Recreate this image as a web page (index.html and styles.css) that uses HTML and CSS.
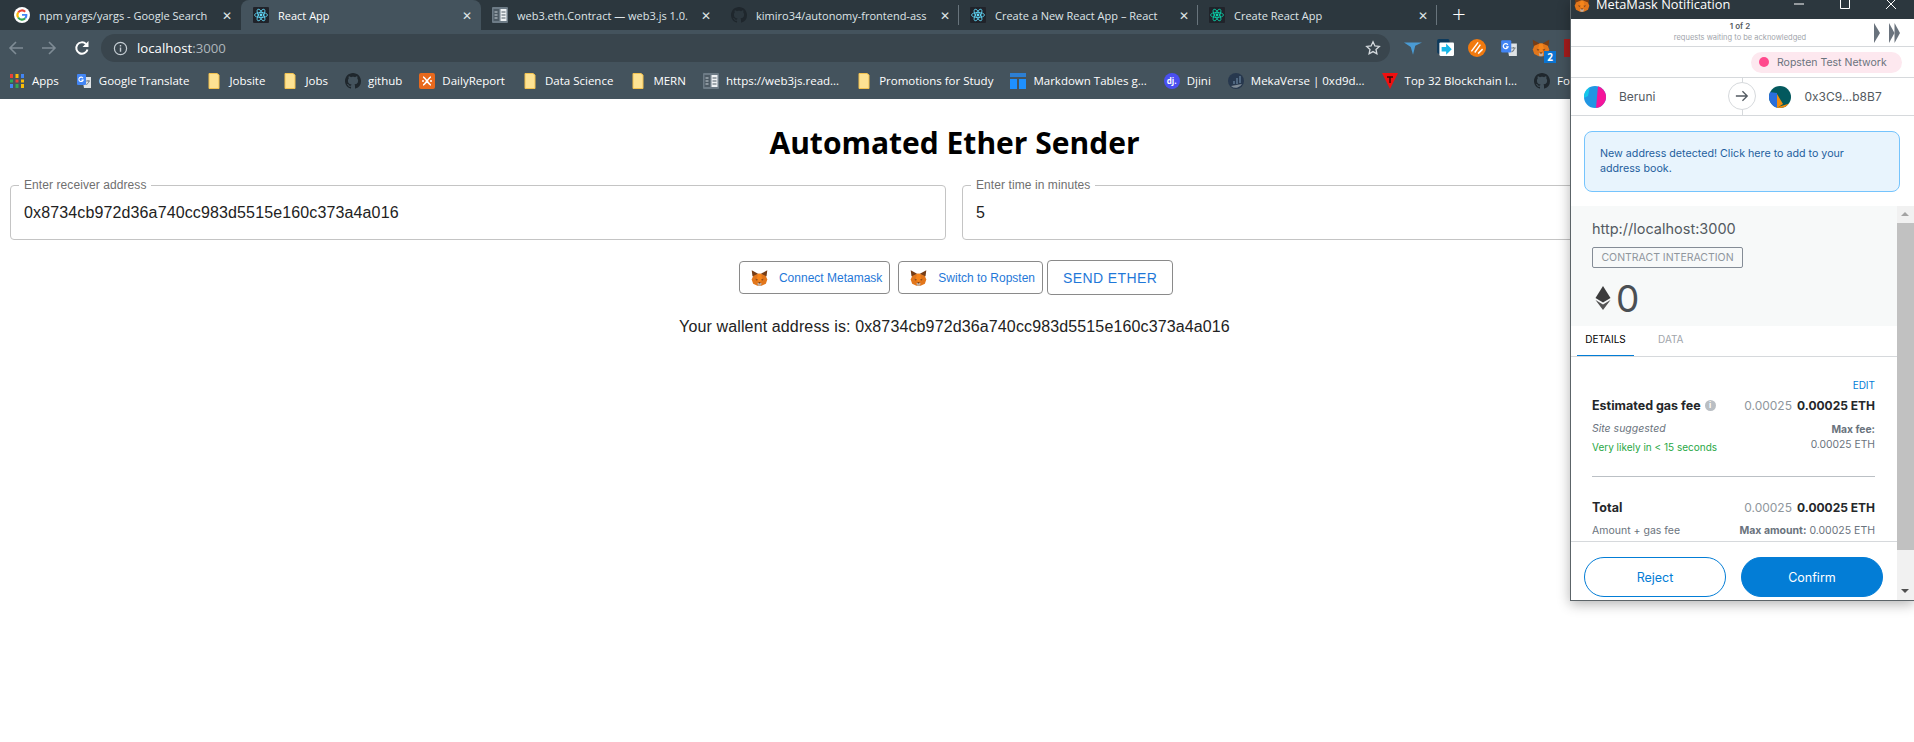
FILE: index.html
```html
<!DOCTYPE html>
<html>
<head>
  <title>React App</title>
  <link rel="stylesheet" href="styles.css">
</head>
<body>
  <svg class="sprite" xmlns="http://www.w3.org/2000/svg">
    <symbol id="fox" viewBox="0 0 24 22">
      <polygon fill="#763d16" points="1,0 10,5 4,10 2,8"/>
      <polygon fill="#763d16" points="23,0 14,5 20,10 22,8"/>
      <polygon fill="#e2761b" points="3,8 10,5 14,5 21,8 23,13 21,19 15,22 9,22 3,19 1,13"/>
      <polygon fill="#f6851b" points="10,5 14,5 16,13 12,17 8,13"/>
      <polygon fill="#8a4a1c" points="6,12 10,13 8,15"/>
      <polygon fill="#8a4a1c" points="18,12 14,13 16,15"/>
      <polygon fill="#c0ad9e" points="9,18 15,18 14,22 10,22"/>
      <polygon fill="#5c3317" points="10.5,17 13.5,17 12,19"/>
    </symbol>
    <symbol id="react" viewBox="0 0 16 16">
      <rect width="16" height="16" rx="1" fill="#20232a"/>
      <g fill="none" stroke="#61dafb" stroke-width=".8">
        <ellipse cx="8" cy="8" rx="6.5" ry="2.5"/>
        <ellipse cx="8" cy="8" rx="6.5" ry="2.5" transform="rotate(60 8 8)"/>
        <ellipse cx="8" cy="8" rx="6.5" ry="2.5" transform="rotate(120 8 8)"/>
      </g>
      <circle cx="8" cy="8" r="1.4" fill="#61dafb"/>
    </symbol>
    <symbol id="react-green" viewBox="0 0 16 16">
      <rect width="16" height="16" rx="1" fill="#20232a"/>
      <g fill="none" stroke="#09d3ac" stroke-width=".8">
        <ellipse cx="8" cy="8" rx="6.5" ry="2.5"/>
        <ellipse cx="8" cy="8" rx="6.5" ry="2.5" transform="rotate(60 8 8)"/>
        <ellipse cx="8" cy="8" rx="6.5" ry="2.5" transform="rotate(120 8 8)"/>
      </g>
      <circle cx="8" cy="8" r="1.4" fill="#09d3ac"/>
    </symbol>
    <symbol id="google" viewBox="0 0 20 20">
      <circle cx="10" cy="10" r="10" fill="#fff"/>
      <path fill="none" stroke="#ea4335" stroke-width="2.6" d="M5.2 6.9A5.8 5.8 0 0 1 14 5.8"/>
      <path fill="none" stroke="#fbbc05" stroke-width="2.6" d="M5.2 6.9a5.8 5.8 0 0 0 0 6.2"/>
      <path fill="none" stroke="#34a853" stroke-width="2.6" d="M5.2 13.1a5.8 5.8 0 0 0 8.9 1.1"/>
      <path fill="#4285f4" d="M10 8.6h6.6c.4 2.400-.3 4.600-1.600 6.200l-2-1.600c.6-.6 1-1.300 1.100-2.200H10z"/>
    </symbol>
    <symbol id="docs" viewBox="0 0 16 16">
      <rect width="16" height="16" rx="1" fill="#6d7b86"/>
      <rect x="1.500" y="2" width="5.500" height="12" fill="#4d5a64"/>
      <rect x="8.500" y="2" width="6" height="12" fill="#eef1f3"/>
      <path stroke="#4d5a64" stroke-width="1.200" d="M9.500 5h4M9.500 8h4M9.500 11h4"/>
      <path stroke="#c9d1d7" stroke-width="1.200" d="M2.500 5h3M2.500 8h3M2.500 11h3"/>
    </symbol>
    <symbol id="github" viewBox="0 0 16 16">
      <path fill="#1f272d" d="M8 0C3.580 0 0 3.580 0 8c0 3.540 2.290 6.530 5.470 7.590.400.070.550-.170.550-.380 0-.190-.010-.820-.010-1.490-2.010.370-2.530-.490-2.690-.940-.090-.230-.480-.940-.820-1.130-.280-.150-.680-.520-.010-.530.630-.010 1.080.580 1.230.820.720 1.210 1.870.870 2.330.660.070-.520.280-.870.510-1.070-1.780-.200-3.640-.890-3.640-3.950 0-.870.310-1.590.820-2.150-.080-.200-.360-1.020.080-2.120 0 0 .670-.210 2.200.820.640-.180 1.320-.270 2-.270.680 0 1.360.090 2 .270 1.530-1.040 2.200-.820 2.200-.820.440 1.100.160 1.920.080 2.120.510.560.820 1.270.820 2.150 0 3.070-1.870 3.750-3.650 3.950.290.250.540.730.540 1.480 0 1.070-.010 1.930-.010 2.200 0 .210.150.460.550.380A8.013 8.013 0 0016 8c0-4.420-3.580-8-8-8z"/>
    </symbol>
    <symbol id="folder" viewBox="0 0 16 16">
      <path fill="#fde293" stroke="#f2c14e" d="M3 .5h8l2 1.500v13.500H3z"/>
    </symbol>
    <symbol id="translate" viewBox="0 0 16 16">
      <path fill="#dfe3e6" d="M6 4h9v11H8z"/>
      <rect x="1" y="1" width="9" height="11" rx="1" fill="#4285f4"/>
      <path fill="none" stroke="#fff" stroke-width="1.100" d="M7 5.200A2.200 2.200 0 1 0 7.200 7H5.400"/>
      <path fill="none" stroke="#7a8288" stroke-width="1" d="M10 8h4M12 7v1M13 8c-.4 2-1.500 3-2.800 3.500"/>
    </symbol>
  </svg>

  <div class="browser">
    <div class="tab-strip">
      <div class="tab tab-first">
        <svg class="favicon"><use href="#google"/></svg>
        <span class="tab-title">npm yargs/yargs - Google Search</span>
        <span class="tab-close">&#10005;</span>
      </div>
      <div class="tab active">
        <svg class="favicon"><use href="#react"/></svg>
        <span class="tab-title">React App</span>
        <span class="tab-close">&#10005;</span>
      </div>
      <div class="tab">
        <svg class="favicon"><use href="#docs"/></svg>
        <span class="tab-title">web3.eth.Contract — web3.js 1.0.</span>
        <span class="tab-close">&#10005;</span>
      </div>
      <div class="tab sep">
        <svg class="favicon"><use href="#github"/></svg>
        <span class="tab-title">kimiro34/autonomy-frontend-ass</span>
        <span class="tab-close">&#10005;</span>
      </div>
      <div class="tab sep">
        <svg class="favicon"><use href="#react"/></svg>
        <span class="tab-title">Create a New React App – React</span>
        <span class="tab-close">&#10005;</span>
      </div>
      <div class="tab sep">
        <svg class="favicon"><use href="#react-green"/></svg>
        <span class="tab-title">Create React App</span>
        <span class="tab-close">&#10005;</span>
      </div>
      <div class="new-tab">+</div>
    </div>

    <div class="toolbar">
      <svg class="nav-icon" viewBox="0 0 16 16"><path fill="none" stroke="#7f8c95" stroke-width="1.600" d="M15 8H2M8 2 2 8l6 6"/></svg>
      <svg class="nav-icon" viewBox="0 0 16 16"><path fill="none" stroke="#7f8c95" stroke-width="1.600" d="M1 8h13M8 2l6 6-6 6"/></svg>
      <svg class="nav-icon" viewBox="0 0 16 16"><path fill="none" stroke="#fff" stroke-width="2" d="M13.500 9.500A5.700 5.700 0 1 1 12 4"/><path fill="#fff" d="M14.500 1v6h-6z"/></svg>
      <div class="omnibox">
        <svg class="info-icon" viewBox="0 0 16 16"><circle cx="8" cy="8" r="6.500" fill="none" stroke="#c4ccd2" stroke-width="1.300"/><path stroke="#c4ccd2" stroke-width="1.500" d="M8 7v4.500M8 4.300v1.500"/></svg>
        <span class="url">localhost<span class="url-dim">:3000</span></span>
        <svg class="star-icon" viewBox="0 0 16 16"><path fill="none" stroke="#d5dade" stroke-width="1.300" d="m8 1.800 1.900 4.100 4.400.500-3.300 3 .900 4.400L8 11.600l-3.900 2.200.900-4.400-3.300-3 4.400-.500z"/></svg>
      </div>
      <div class="extensions">
        <svg class="ext-icon" viewBox="0 0 16 16"><path fill="#4a9bd4" d="M0 3h16l-6 3-2 8-2-7z"/></svg>
        <svg class="ext-icon" viewBox="0 0 16 16"><rect x="1" y="0" width="11" height="13" rx="1.500" fill="#0d3a5c"/><rect x="3" y="3" width="13" height="12" rx="1" fill="#fff"/><path fill="#17b7e8" d="M5 7h4V4l5 5-5 5v-3H5z"/></svg>
        <svg class="ext-icon" viewBox="0 0 16 16"><circle cx="8" cy="8" r="8" fill="#f27a0f"/><path fill="none" stroke="#fff" stroke-width="1.300" d="M3 11 9 3M6 12l5-7M9 13l4-4"/></svg>
        <svg class="ext-icon"><use href="#translate"/></svg>
        <div class="ext-badged">
          <svg class="ext-icon"><use href="#fox"/></svg>
          <span class="ext-badge">2</span>
        </div>
        <div class="ext-red"></div>
      </div>
    </div>

    <div class="bookmarks">
      <div class="bookmark">
        <svg class="bm-icon" viewBox="0 0 16 16">
          <path stroke="#ea4335" stroke-width="3" d="M2.500 1v4"/><path stroke="#fbbc05" stroke-width="3" d="M8 1v4"/><path stroke="#4285f4" stroke-width="3" d="M13.500 1v4"/>
          <path stroke="#34a853" stroke-width="3" d="M2.500 6.500v3"/><path stroke="#ea4335" stroke-width="3" d="M8 6.500v3"/><path stroke="#fbbc05" stroke-width="3" d="M13.500 6.500v3"/>
          <path stroke="#4285f4" stroke-width="3" d="M2.500 11v4"/><path stroke="#34a853" stroke-width="3" d="M8 11v4"/><path stroke="#fbbc05" stroke-width="3" d="M13.500 11v4"/>
        </svg>
        Apps
      </div>
      <div class="bookmark"><svg class="bm-icon"><use href="#translate"/></svg>Google Translate</div>
      <div class="bookmark"><svg class="bm-icon"><use href="#folder"/></svg>Jobsite</div>
      <div class="bookmark"><svg class="bm-icon"><use href="#folder"/></svg>Jobs</div>
      <div class="bookmark"><svg class="bm-icon"><use href="#github"/></svg>github</div>
      <div class="bookmark">
        <svg class="bm-icon" viewBox="0 0 16 16"><rect width="16" height="16" rx="2" fill="#e8691d"/><path fill="none" stroke="#fff" stroke-width="1.600" d="M4 4c2 0 6 8 8 8M12 4C10 4 6 12 4 12M3 8h2M11 8h2"/></svg>
        DailyReport
      </div>
      <div class="bookmark"><svg class="bm-icon"><use href="#folder"/></svg>Data Science</div>
      <div class="bookmark"><svg class="bm-icon"><use href="#folder"/></svg>MERN</div>
      <div class="bookmark"><svg class="bm-icon"><use href="#docs"/></svg>https://web3js.read...</div>
      <div class="bookmark"><svg class="bm-icon"><use href="#folder"/></svg>Promotions for Study</div>
      <div class="bookmark">
        <svg class="bm-icon" viewBox="0 0 16 16"><rect width="16" height="4" fill="#2d7fd3"/><rect y="6" width="7" height="10" fill="#1e90ff"/><rect x="9" y="6" width="7" height="10" fill="#1e90ff"/></svg>
        Markdown Tables g...
      </div>
      <div class="bookmark"><span class="djini-icon">dj.</span>Djini</div>
      <div class="bookmark">
        <svg class="bm-icon" viewBox="0 0 16 16"><circle cx="8" cy="8" r="8" fill="#27384e"/><path fill="#7f8b96" d="M3 13a7 7 0 0 0 11-2l-3 .500z"/><path stroke="#5e7690" stroke-width="1.500" d="M6 11V8M9 11V5M12 10V3"/></svg>
        MekaVerse | 0xd9d...
      </div>
      <div class="bookmark">
        <svg class="bm-icon" viewBox="0 0 16 16"><polygon fill="#f01010" points="0,0 16,0 8,16"/><path stroke="#3a0808" stroke-width="1.500" d="M5 4h6M8 4v6"/></svg>
        Top 32 Blockchain I...
      </div>
      <div class="bookmark"><svg class="bm-icon"><use href="#github"/></svg>For s</div>
    </div>
  </div>

  <main class="app">
    <h1 class="app-title">Automated Ether Sender</h1>
    <div class="field-row">
      <fieldset class="field">
        <legend>Enter receiver address</legend>
        <input type="text" value="0x8734cb972d36a740cc983d5515e160c373a4a016">
      </fieldset>
      <fieldset class="field">
        <legend>Enter time in minutes</legend>
        <input type="text" value="5">
      </fieldset>
    </div>
    <div class="actions">
      <button class="btn btn-fox"><svg class="fox-icon"><use href="#fox"/></svg>Connect Metamask</button>
      <button class="btn btn-fox"><svg class="fox-icon"><use href="#fox"/></svg>Switch to Ropsten</button>
      <button class="btn btn-send">SEND ETHER</button>
    </div>
    <p class="wallet">Your wallent address is: 0x8734cb972d36a740cc983d5515e160c373a4a016</p>
  </main>

  <div class="popup">
    <div class="popup-titlebar">
      <svg class="popup-fox"><use href="#fox"/></svg>
      <span class="popup-title">MetaMask Notification</span>
      <div class="window-controls">
        <svg viewBox="0 0 12 12"><path stroke="#fff" d="M1 6h10"/></svg>
        <svg viewBox="0 0 12 12"><path fill="none" stroke="#fff" d="M1.500 1.500h9v9h-9z"/></svg>
        <svg viewBox="0 0 12 12"><path stroke="#fff" d="m1 1 10 10M11 1 1 11"/></svg>
      </div>
    </div>

    <div class="request-nav">
      <div class="request-count">1 of 2</div>
      <div class="request-text">requests waiting to be acknowledged</div>
      <div class="request-arrows">
        <svg class="arrow-one" viewBox="0 0 6 20"><polygon fill="#6a737d" points="0,0 6,10 0,20"/></svg>
        <svg class="arrow-two" viewBox="0 0 11 20"><polygon fill="#6a737d" points="0,0 5.500,10 0,20"/><polygon fill="#6a737d" points="5.500,0 11,10 5.500,20"/></svg>
      </div>
    </div>

    <div class="network-row">
      <div class="network-pill"><span class="network-dot"></span>Ropsten Test Network</div>
    </div>

    <div class="accounts">
      <svg class="avatar" viewBox="0 0 22 22">
        <clipPath id="av1"><circle cx="11" cy="11" r="11"/></clipPath>
        <g clip-path="url(#av1)">
          <rect width="22" height="22" fill="#2196e3"/>
          <polygon fill="#f5159a" points="14,0 22,0 22,22 12,22"/>
          <polygon fill="#14c8ea" points="0,0 6,0 4,10 0,12"/>
        </g>
      </svg>
      <span class="account-name">Beruni</span>
      <span class="account-arrow">
        <svg viewBox="0 0 16 16"><path fill="none" stroke="#535a61" stroke-width="1.500" d="M1 8h13M8.500 2.500 14 8l-5.500 5.500"/></svg>
      </span>
      <svg class="avatar avatar-to" viewBox="0 0 22 22">
        <clipPath id="av2"><circle cx="11" cy="11" r="11"/></clipPath>
        <g clip-path="url(#av2)">
          <rect width="22" height="22" fill="#03595e"/>
          <polygon fill="#f18c0e" points="6,22 22,17 22,22"/>
          <polygon fill="#f18c0e" points="8,8 14,18 8,22"/>
          <polygon fill="#2a6fdb" points="0,6 8,7 8,22 0,22"/>
        </g>
      </svg>
      <span class="account-name account-to">0x3C9...b8B7</span>
    </div>

    <div class="notice">New address detected! Click here to add to your address book.</div>

    <div class="confirm-area">
      <div class="confirm-col">
        <div class="summary">
          <div class="origin">http://localhost:3000</div>
          <div class="action-badge">CONTRACT INTERACTION</div>
          <div class="amount">
            <svg class="eth-icon" viewBox="0 0 16 24"><polygon fill="#3c3c3d" points="8,0 15.500,12 8,16.500 .5,12"/><polygon fill="#555" points=".5,14 8,18.500 15.500,14 8,24"/></svg>
            <span>0</span>
          </div>
        </div>
        <div class="popup-tabs">
          <div class="popup-tab selected">DETAILS</div>
          <div class="popup-tab">DATA</div>
        </div>
        <div class="details">
          <div class="edit-link">EDIT</div>
          <div class="fee-row">
            <span class="fee-label">Estimated gas fee <span class="fee-info">i</span></span>
            <span class="fee-values"><span class="fee-dim">0.00025</span><b>0.00025 ETH</b></span>
          </div>
          <div class="fee-sub">
            <div class="fee-left">
              <div class="fee-italic">Site suggested</div>
              <div class="fee-green">Very likely in &lt; 15 seconds</div>
            </div>
            <div class="fee-right">
              <div><b>Max fee:</b></div>
              <div>0.00025 ETH</div>
            </div>
          </div>
          <div class="fee-divider"></div>
          <div class="fee-row fee-total">
            <span class="fee-label">Total</span>
            <span class="fee-values"><span class="fee-dim">0.00025</span><b>0.00025 ETH</b></span>
          </div>
          <div class="fee-sub fee-sub-total">
            <span>Amount + gas fee</span>
            <span><b>Max amount:</b> 0.00025 ETH</span>
          </div>
        </div>
        <div class="popup-footer">
          <button class="pill-btn reject">Reject</button>
          <button class="pill-btn confirm">Confirm</button>
        </div>
      </div>
      <div class="scrollbar">
        <span class="scroll-up"></span>
        <div class="scroll-track"><div class="scroll-thumb"></div></div>
        <span class="scroll-down"></span>
      </div>
    </div>
  </div>
</body>
</html>
```

FILE: styles.css
```css
html, body {
  margin: 0;
  height: 100%;
  background: #fff;
}

body {
  position: relative;
  width: 1914px;
  height: 742px;
  overflow: hidden;
  font-family: 'Liberation Sans', Arial, sans-serif;
  color: #1a1a1a;
}

.sprite {
  display: none;
}

/* browser chrome */
.browser {
  height: 99px;
  background: #44535d;
  font-family: 'Open Sans', sans-serif;
  color: #fff;
}

.tab-strip {
  display: flex;
  height: 30px;
  background: #2c373e;
}

.tab {
  display: flex;
  align-items: center;
  position: relative;
  box-sizing: border-box;
  width: 239px;
  padding: 0 9px 0 11px;
  font-size: 11px;
  color: #dfe4e7;
}

.tab-first {
  width: 241px;
  padding-left: 14px;
}

.tab.active {
  background: #44535d;
  color: #fff;
  border-radius: 8px 8px 0 0;
  width: 240px;
  padding-left: 12px;
}

.tab.sep::after {
  content: "";
  position: absolute;
  right: 0;
  top: 5px;
  height: 20px;
  width: 1px;
  background: #68747c;
}

.favicon {
  flex: none;
  width: 16px;
  height: 16px;
  margin-right: 9px;
}

.tab-title {
  flex: 1;
  overflow: hidden;
  white-space: nowrap;
}

.tab-close {
  flex: none;
  margin-left: 6px;
  font-size: 12px;
  color: #dfe4e7;
}

.new-tab {
  margin-left: 15px;
  font-size: 24px;
  line-height: 28px;
  font-weight: 300;
}

.toolbar {
  display: flex;
  align-items: center;
  height: 32px;
  padding: 4px 0 0 8px;
  box-sizing: border-box;
}

.nav-icon {
  width: 16px;
  height: 16px;
  margin-right: 17px;
}

.omnibox {
  display: flex;
  align-items: center;
  box-sizing: border-box;
  width: 1289px;
  height: 28px;
  margin-left: -6px;
  padding: 0 9px 0 12px;
  background: #39454d;
  border-radius: 14px;
}

.info-icon {
  width: 15px;
  height: 15px;
  margin-right: 9px;
}

.url {
  flex: 1;
  font-size: 13.200px;
  color: #fff;
}

.url-dim {
  color: #aeb6bc;
}

.star-icon {
  width: 16px;
  height: 16px;
}

.extensions {
  display: flex;
  align-items: center;
  gap: 14px;
  margin-left: 14px;
}

.ext-icon {
  display: block;
  width: 18px;
  height: 18px;
}

.ext-badged {
  position: relative;
}

.ext-badge {
  position: absolute;
  right: -6px;
  bottom: -6px;
  width: 12px;
  height: 12px;
  background: #0b74d1;
  font-size: 10px;
  font-weight: 700;
  line-height: 12px;
  text-align: center;
}

.ext-red {
  width: 14px;
  height: 18px;
  background: #a51c1c;
}

.bookmarks {
  display: flex;
  align-items: center;
  gap: 17px;
  height: 37px;
  padding-left: 9px;
  font-size: 11.500px;
  white-space: nowrap;
}

.bookmark {
  display: flex;
  align-items: center;
}

.bm-icon {
  flex: none;
  width: 16px;
  height: 16px;
  margin-right: 7px;
}

.djini-icon {
  flex: none;
  width: 16px;
  height: 16px;
  margin-right: 7px;
  background: #4a4ff0;
  border-radius: 50%;
  font-size: 8px;
  font-weight: 700;
  line-height: 15px;
  text-align: center;
}

/* page */
.app-title {
  margin: 24px 0 15px;
  padding-right: 5px;
  font-family: 'Open Sans', sans-serif;
  font-size: 30px;
  line-height: 40px;
  font-weight: 700;
  text-align: center;
  color: #000;
}

.field-row {
  display: grid;
  grid-template-columns: 1fr 1fr;
  gap: 16px;
  padding: 0 16px 0 10px;
}

.field {
  margin: 0;
  padding: 0 8px;
  height: 62px;
  box-sizing: border-box;
  border: 1px solid #c4c4c4;
  border-radius: 4px;
  min-width: 0;
}

.field legend {
  padding: 0 5px;
  font-size: 12px;
  line-height: 14px;
  letter-spacing: .08px;
  color: #6f6f6f;
}

.field input {
  display: block;
  box-sizing: border-box;
  width: 100%;
  height: 42px;
  padding: 0 5px;
  border: none;
  outline: none;
  background: none;
  font-family: 'Liberation Sans', Arial, sans-serif;
  font-size: 16px;
  letter-spacing: .13px;
  color: #222;
}

.actions {
  display: flex;
  justify-content: center;
  align-items: center;
  gap: 4px;
  margin-top: 20px;
  padding-right: 2px;
}

.btn {
  box-sizing: border-box;
  display: flex;
  align-items: center;
  border: 1px solid #8a8a8a;
  border-radius: 4px;
  background: #fff;
  color: #1f78d8;
  font-family: 'Liberation Sans', Arial, sans-serif;
  cursor: pointer;
}

.btn-fox {
  height: 33px;
  padding: 0 7px 0 11px;
  margin-right: 4px;
  font-size: 12px;
}

.btn-fox + .btn-fox {
  margin-right: 0;
}

.fox-icon {
  width: 17px;
  height: 16px;
  margin-right: 11px;
}

.btn-send {
  height: 35px;
  width: 126px;
  justify-content: center;
  font-size: 14px;
  letter-spacing: .4px;
}

.wallet {
  margin: 23px 0 0;
  padding-right: 5px;
  font-size: 16px;
  line-height: 18px;
  letter-spacing: .13px;
  text-align: center;
  color: #222;
}

/* metamask window */
.popup {
  position: absolute;
  top: 0;
  right: 0;
  width: 344px;
  height: 601px;
  box-sizing: border-box;
  display: flex;
  flex-direction: column;
  background: #fff;
  border-left: 1px solid #5c6468;
  border-bottom: 1px solid #5c6468;
  box-shadow: 0 3px 12px rgba(0,0,0,0.3);
  font-family: 'Inter', sans-serif;
  color: #24272a;
  overflow: hidden;
}

.popup-titlebar {
  display: flex;
  align-items: center;
  flex: none;
  height: 19px;
  padding: 0 0 11px 3px;
  box-sizing: border-box;
  background: #2c373e;
  color: #fff;
  font-family: 'Open Sans', sans-serif;
  font-size: 12.800px;
}

.popup-fox {
  width: 16px;
  height: 15px;
  margin-right: 6px;
  flex: none;
}

.popup-title {
  white-space: nowrap;
}

.window-controls {
  display: flex;
  gap: 34px;
  margin-left: auto;
  padding-right: 17px;
}

.window-controls svg {
  width: 12px;
  height: 12px;
}

.request-nav {
  position: relative;
  flex: none;
  height: 28px;
  box-sizing: border-box;
  padding-top: 2px;
  border-bottom: 1px solid #d6d9dc;
  text-align: center;
  padding-right: 5px;
}

.request-count {
  font-size: 8px;
  line-height: 11px;
  font-weight: 600;
  color: #535a61;
}

.request-text {
  font-size: 7.500px;
  line-height: 11px;
  color: #9fa5ab;
}

.request-arrows {
  position: absolute;
  top: 4px;
  right: 14px;
  display: flex;
  gap: 9px;
}

.arrow-one {
  width: 6px;
  height: 20px;
}

.arrow-two {
  width: 11px;
  height: 20px;
}

.network-row {
  display: flex;
  justify-content: flex-end;
  align-items: center;
  flex: none;
  height: 31px;
  box-sizing: border-box;
  padding-right: 12px;
  border-bottom: 1px solid #d6d9dc;
}

.network-pill {
  display: flex;
  align-items: center;
  box-sizing: border-box;
  width: 151px;
  height: 21px;
  padding-left: 8px;
  background: #fde8ef;
  border-radius: 11px;
  font-size: 10.500px;
  color: #6a737d;
  white-space: nowrap;
}

.network-dot {
  width: 10px;
  height: 10px;
  margin-right: 8px;
  border-radius: 50%;
  background: #ff4a8d;
}

.accounts {
  position: relative;
  display: flex;
  align-items: center;
  flex: none;
  height: 38px;
  box-sizing: border-box;
  padding-left: 13px;
  border-bottom: 1px solid #d6d9dc;
}

.accounts::before {
  content: "";
  position: absolute;
  left: 171px;
  top: 0;
  bottom: 0;
  width: 1px;
  background: #d6d9dc;
}

.avatar {
  flex: none;
  width: 22px;
  height: 22px;
}

.account-name {
  margin-left: 13px;
  font-size: 12px;
  color: #535a61;
}

.account-arrow {
  position: absolute;
  left: 157px;
  top: 4px;
  display: flex;
  align-items: center;
  justify-content: center;
  box-sizing: border-box;
  width: 28px;
  height: 28px;
  border: 1px solid #d6d9dc;
  border-radius: 50%;
  background: #fff;
}

.account-arrow svg {
  width: 14px;
  height: 14px;
}

.avatar-to {
  margin-left: 114px;
}

.notice {
  flex: none;
  box-sizing: border-box;
  width: 316px;
  height: 61px;
  margin: 15px 0 14px 13px;
  padding: 14px 40px 0 15px;
  background: #e8f4fd;
  border: 1px solid #75c4fd;
  border-radius: 8px;
  font-size: 10.700px;
  line-height: 15px;
  color: #1f5f9e;
}

.confirm-area {
  display: flex;
  flex: 1;
  min-height: 0;
}

.confirm-col {
  display: flex;
  flex-direction: column;
  flex: 1;
  min-width: 0;
}

.summary {
  flex: none;
  height: 120px;
  box-sizing: border-box;
  padding: 14px 0 0 21px;
  background: #f7f9f9;
}

.origin {
  font-size: 14.500px;
  line-height: 18px;
  color: #535a61;
}

.action-badge {
  display: inline-block;
  box-sizing: border-box;
  width: 151px;
  height: 21px;
  margin-top: 9px;
  border: 1px solid #848c96;
  border-radius: 2px;
  font-size: 10.500px;
  line-height: 19px;
  text-align: center;
  color: #8f969d;
  white-space: nowrap;
}

.amount {
  display: flex;
  align-items: center;
  height: 36px;
  margin-top: 12px;
  padding-left: 3px;
  font-size: 37px;
  color: #4a4f54;
}

.eth-icon {
  width: 16px;
  height: 24px;
  margin-right: 5px;
}

.popup-tabs {
  display: flex;
  flex: none;
  height: 31px;
  box-sizing: border-box;
  padding-left: 6px;
  border-bottom: 1px solid #d6d9dc;
}

.popup-tab {
  box-sizing: border-box;
  height: 30px;
  padding: 0 12px;
  font-size: 10px;
  line-height: 26px;
  color: #9fa5ab;
}

.popup-tab + .popup-tab {
  margin-left: 12px;
}

.popup-tab.selected {
  width: 57px;
  padding: 0;
  text-align: center;
  color: #000;
  border-bottom: 1px solid #037dd6;
}

.details {
  flex: 1;
  min-height: 0;
  overflow: hidden;
  padding: 21px 22px 0 21px;
}

.edit-link {
  font-size: 10px;
  line-height: 14px;
  text-align: right;
  color: #037dd6;
}

.fee-row {
  display: flex;
  justify-content: space-between;
  align-items: center;
  margin-top: 5px;
  font-size: 12.500px;
  line-height: 18px;
}

.fee-label {
  font-weight: 700;
  color: #24272a;
  white-space: nowrap;
}

.fee-info {
  display: inline-block;
  width: 11px;
  height: 11px;
  margin-left: 1px;
  border-radius: 50%;
  background: #b9bec3;
  color: #fff;
  font-size: 8px;
  line-height: 11px;
  text-align: center;
  vertical-align: 2px;
}

.fee-values {
  font-size: 12px;
  white-space: nowrap;
}

.fee-values b {
  margin-left: 5px;
}

.fee-dim {
  color: #8f969d;
  font-weight: 400;
}

.fee-sub {
  display: flex;
  justify-content: space-between;
  margin-top: 5px;
  font-size: 10px;
  color: #6a737d;
}

.fee-left {
  line-height: 18px;
}

.fee-italic {
  font-size: 10.500px;
  font-style: italic;
}

.fee-green {
  color: #28a745;
}

.fee-right {
  padding-top: 2px;
  line-height: 15px;
  font-size: 10.300px;
  text-align: right;
}

.fee-divider {
  height: 1px;
  margin-top: 20px;
  background: #bbc0c5;
}

.fee-total {
  margin-top: 22px;
}

.fee-sub-total {
  margin-top: 7px;
  font-size: 10.500px;
  line-height: 14px;
}

.popup-footer {
  display: flex;
  flex: none;
  gap: 15px;
  height: 59px;
  box-sizing: border-box;
  padding: 15px 0 0 13px;
  border-top: 1px solid #d6d9dc;
}

.pill-btn {
  box-sizing: border-box;
  width: 142px;
  height: 40px;
  border-radius: 20px;
  border: 1px solid #037dd6;
  font-family: 'Inter', sans-serif;
  font-size: 12.500px;
  cursor: pointer;
}

.reject {
  background: #fff;
  color: #037dd6;
}

.confirm {
  background: #037dd6;
  color: #fff;
}

.scrollbar {
  display: flex;
  flex-direction: column;
  flex: none;
  width: 17px;
  background: #f1f1f1;
}

.scroll-up, .scroll-down {
  flex: none;
  height: 17px;
  position: relative;
}

.scroll-up::before, .scroll-down::before {
  content: "";
  position: absolute;
  left: 4px;
  top: 6px;
  border-left: 4px solid transparent;
  border-right: 4px solid transparent;
}

.scroll-up::before {
  border-bottom: 4px solid #a3a3a3;
}

.scroll-down::before {
  border-top: 4px solid #505050;
}

.scroll-track {
  flex: 1;
}

.scroll-thumb {
  height: 327px;
  background: #c1c1c1;
}
```
